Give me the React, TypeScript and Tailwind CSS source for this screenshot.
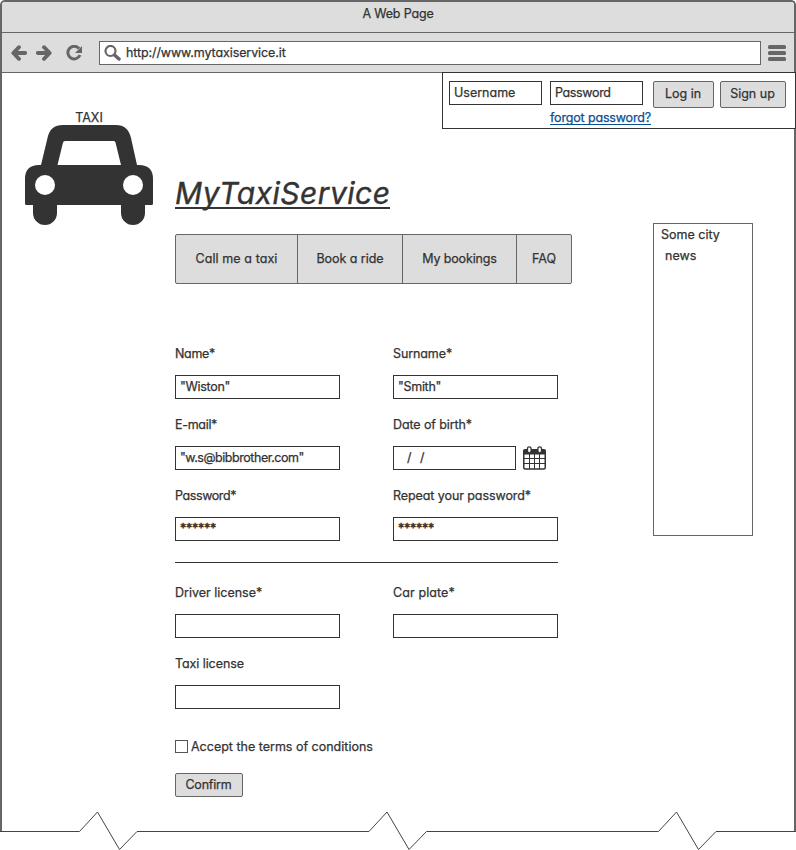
import type { ReactNode } from "react";

function T({ children, className = "" }: { children: ReactNode; className?: string }) {
  return <span className={"inline-block whitespace-pre " + className}>{children}</span>;
}

type FieldProps = {
  label: string;
  value?: string;
  date?: boolean;
  labelClass?: string;
  valueClass?: string;
};

function Field({ label, value, date = false, labelClass = "", valueClass = "" }: FieldProps) {
  return (
    <label className="block h-[71px]">
      <span className="flex h-[22px] items-start leading-[14px]">
        <T className={labelClass}>{label}</T>
      </span>
      <span className="mt-1.5 flex items-center">
        <span className={(date ? "w-[123px]" : "w-[165px]") + " flex h-6 border border-[#333] bg-white pl-1 leading-[21px]"}>
          {value && <T className={valueClass}>{value}</T>}
        </span>
        {date && <Calendar />}
      </span>
    </label>
  );
}

function Calendar() {
  return (
    <svg className="ml-[7px] h-6 w-[23px] overflow-visible" viewBox="0 0 23 24" fill="none">
      <rect x="0.75" y="4.5" width="21.5" height="18.5" rx="1.5" fill="#fff" stroke="#333" strokeWidth="1.5" />
      <path d="M0 8.500V5a2 2 0 0 1 2-2h19a2 2 0 0 1 2 2v3.500z" fill="#333" />
      <path d="M6.500 8v15M11.500 8v15M16.500 8v15M1 12.500h21M1 17.500h21" stroke="#333" />
      <rect x="4.5" y="0.800" width="3.600" height="6" rx="1.800" fill="#fff" stroke="#333" strokeWidth="1.300" />
      <rect x="14.900" y="0.800" width="3.600" height="6" rx="1.800" fill="#fff" stroke="#333" strokeWidth="1.300" />
    </svg>
  );
}

export default function App() {
  return (
    <div className="flex h-[850px] w-[796px] flex-col overflow-hidden bg-white font-[Inter,'Noto_Sans',sans-serif] text-[12.5px] text-[#333] [-webkit-text-stroke:0.25px] [font-feature-settings:'cv11']">
      <div className="flex h-[810px] flex-col rounded-t-[5px] border-x-2 border-t-2 border-[#666]">
        <header className="h-[71px] rounded-t-[3px] border-b border-[#666] bg-[#ddd]">
          <div className="flex h-[31px] justify-center border-b border-[#666] leading-6">
            <T className="tracking-[-0.17px]">A Web Page</T>
          </div>
          <div className="flex h-[39px] items-center pl-[9px]">
            <svg width="16" height="16" viewBox="0 0 16 16" fill="none" stroke="#666"><path d="M8 2.200 2.300 8 8 13.800M3 8h11.200" strokeWidth="3.800" strokeLinejoin="round" strokeLinecap="round" /></svg>
            <svg className="ml-[9px]" width="16" height="16" viewBox="0 0 16 16" fill="none" stroke="#666"><path d="M8 2.200 13.700 8 8 13.800M13 8H1.800" strokeWidth="3.800" strokeLinejoin="round" strokeLinecap="round" /></svg>
            <svg className="ml-[14px]" width="16" height="16" viewBox="0 0 16 16" fill="none" stroke="#666"><path d="M13 3.500A6.300 6.300 0 1 0 14 10" strokeWidth="3" /><path d="M16 1v7H9z" fill="#666" stroke="none" /></svg>
            <div className="ml-[17px] flex h-6 w-[662px] items-center border border-[#666] bg-white pl-1">
              <svg width="17" height="16" viewBox="0 0 17 16" fill="none" stroke="#666"><circle cx="6.500" cy="6" r="5" strokeWidth="2.200" /><path d="m10.500 10 4.500 4" strokeWidth="3.500" strokeLinecap="round" /></svg>
              <T className="ml-[5px] pt-0.5 tracking-[-0.1px]">http://www.mytaxiservice.it</T>
            </div>
            <svg className="ml-[7px]" width="18" height="16" viewBox="0 0 18 16" fill="#666"><rect width="18" height="4" rx="1.500" /><rect y="6" width="18" height="4" rx="1.500" /><rect y="12" width="18" height="4" rx="1.500" /></svg>
          </div>
        </header>
        <div className="flex flex-1">
          <div className="flex w-[173px] flex-col pt-9 pl-[23px]">
            <div className="flex h-4 w-32 justify-center leading-[18px]"><T>TAXI</T></div>
            <svg className="h-[100px] w-32" viewBox="25 125 128 100" fill="#333">
              <path fillRule="evenodd" d="M41 165l6.500-27Q50 125 63 125H116Q128 125 131 138L137 165H139Q153 165 153 179V203.500Q153 205 151.500 205H26.500Q25 205 25 203.500V179Q25 165 39 165ZM57.500 165H121L115.500 142.500Q115 141 114 141H65Q63.500 141 63 142.500Z" />
              <path d="M33 204H57V213a12 12 0 0 1-24 0ZM121 204h24v9a12 12 0 0 1-24 0Z" />
              <circle cx="45" cy="185" r="10" fill="#fff" />
              <circle cx="133" cy="185" r="10" fill="#fff" />
            </svg>
          </div>
          <div className="-mt-px -mr-0.5 flex flex-1 flex-col">
            <div className="flex h-[57px] w-[354px] gap-2 self-end border border-[#333] bg-white pt-2 pl-1.5">
              <div className="h-6 w-[93px] border border-[#333] pl-1 leading-[21px]"><T>Username</T></div>
              <div className="w-[95px] leading-[21px]">
                <div className="h-6 w-[93px] border border-[#333] pl-1"><T className="tracking-[-0.35px]">Password</T></div>
                <a className="mt-[5px] block h-[15px] w-[101px] border-b border-[#0b4f92] leading-4 text-[#0b4f92]"><T className="tracking-[-0.16px]">forgot password?</T></a>
              </div>
              <button className="h-[27px] w-[61px] shrink-0 rounded-[2px] border border-[#666] bg-[#ddd] pr-px"><T>Log in</T></button>
              <button className="-ml-0.5 h-[27px] w-[66px] shrink-0 rounded-[2px] border border-[#666] bg-[#ddd] pr-px"><T>Sign up</T></button>
            </div>
            <div className="flex">
              <main className="w-[478px] pt-[42px]">
                <h1 className="h-[38px] w-[215px] border-b-2 border-[#333] text-[30px] leading-[45px] italic [-webkit-text-stroke:0.4px]"><T className="tracking-[0.5px]">MyTaxiService</T></h1>
                <nav className="mt-[25px] flex h-[50px] w-[397px] rounded-[2px] border border-[#666] bg-[#ddd]">
                  <a className="flex w-[122px] items-center justify-center border-r border-[#666]"><T className="tracking-[0.08px]">Call me a taxi</T></a>
                  <a className="flex w-[105px] items-center justify-center border-r border-[#666]"><T className="tracking-[-0.05px]">Book a ride</T></a>
                  <a className="flex w-[114px] items-center justify-center border-r border-[#666]"><T className="tracking-[-0.15px]">My bookings</T></a>
                  <a className="flex w-[54px] items-center justify-center"><T>FAQ</T></a>
                </nav>
                <form>
                  <div className="mt-[63px] grid w-[383px] grid-cols-[218px_165px] border-b border-[#333] pb-[2px]">
                    <Field label="Name*" labelClass="tracking-[-0.3px]" value={'"Wiston"'} valueClass="tracking-[-0.3px]" />
                    <Field label="Surname*" labelClass="tracking-[-0.1px]" value={'"Smith"'} valueClass="tracking-[-0.3px]" />
                    <Field label="E-mail*" labelClass="tracking-[-0.3px]" value={'"w.s@bibbrother.com"'} valueClass="tracking-[-0.46px]" />
                    <Field label="Date of birth*" labelClass="tracking-[-0.1px]" value="/  /" valueClass="ml-[9px] tracking-[0.5px]" date />
                    <Field label="Password*" labelClass="tracking-[-0.4px]" value="******" valueClass="tracking-[-0.25px] [-webkit-text-stroke:0.5px]" />
                    <Field label="Repeat your password*" labelClass="tracking-[-0.08px]" value="******" valueClass="tracking-[-0.25px] [-webkit-text-stroke:0.5px]" />
                  </div>
                  <div className="mt-[23px] grid w-[383px] grid-cols-[218px_165px]">
                    <Field label="Driver license*" />
                    <Field label="Car plate*" labelClass="tracking-[0.1px]" />
                    <Field label="Taxi license" labelClass="tracking-[-0.08px]" />
                  </div>
                  <label className="mt-2.5 flex h-4 items-center"><span className="mr-[3px] h-[13px] w-[13px] border border-[#555]" /><T className="pt-0.5">Accept the terms of conditions</T></label>
                  <button className="mt-[19px] block h-6 w-[68px] rounded-[2px] border border-[#666] bg-[#ddd] pt-px pr-px"><T className="tracking-[-0.2px]">Confirm</T></button>
                </form>
              </main>
              <aside className="mt-[94px] flex h-[313px] w-[100px] flex-col items-start border border-[#666] pl-[7px] leading-[21px]">
                <T>Some city</T>
                <T className="ml-1">news</T>
              </aside>
            </div>
          </div>
        </div>
      </div>
      <svg className="h-10 w-[796px] shrink-0" viewBox="0 0 796 40" fill="none">
        <path d="M1 0v22M795 0v22" stroke="#666" strokeWidth="2" />
        <path d="M0 21.500H79.500L97.500 2 119.500 39.500 137 21.500H369L387 2 409 39.500 426.500 21.500H658.500L676.500 2 698.500 39.500 716 21.500H796" stroke="#444" />
      </svg>
    </div>
  );
}
